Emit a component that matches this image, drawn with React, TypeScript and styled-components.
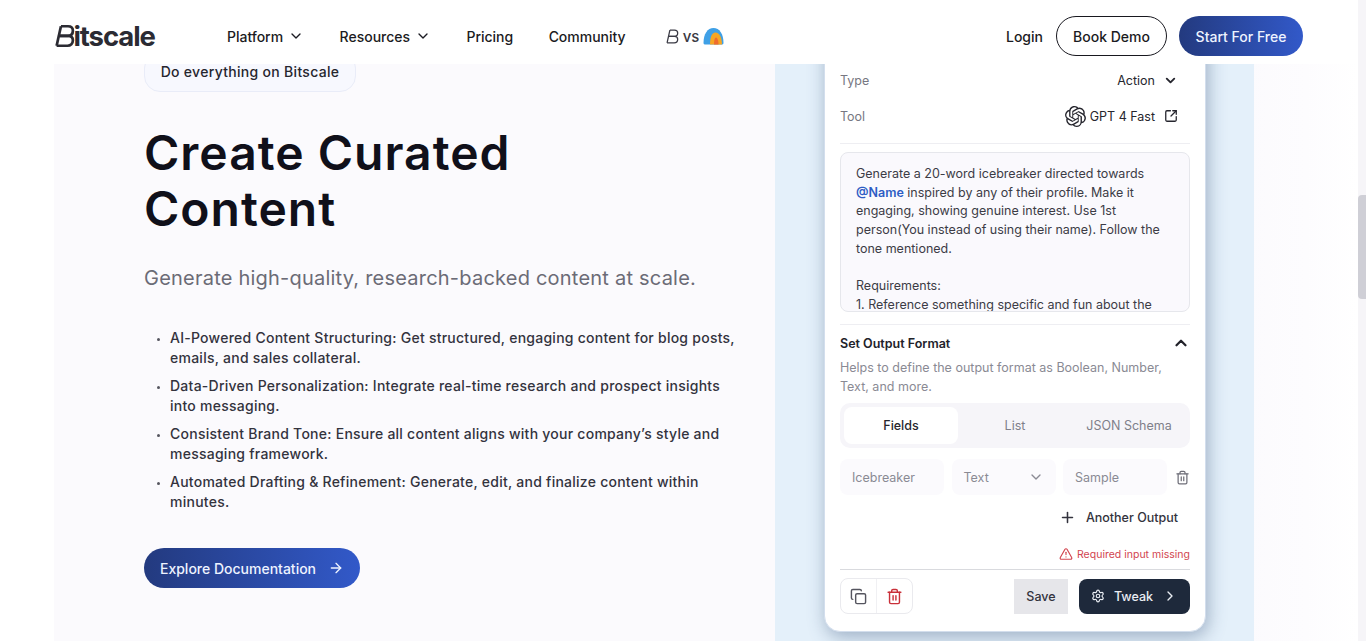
import { FC } from 'react'
import styled, { createGlobalStyle } from 'styled-components'
import {
  ArrowRight,
  ChevronDown,
  ChevronRight,
  ChevronUp,
  Copy,
  Plus,
  Settings,
  SquareArrowOutUpRight,
  Trash2,
  TriangleAlert,
} from 'lucide-react'
import { SiOpenai } from 'react-icons/si'

const GlobalStyle = createGlobalStyle`
  html, body {
    margin: 0;
    padding: 0;
    height: 641px;
    overflow: hidden;
    background: #fff;
    font-family: Inter, 'Liberation Sans', sans-serif;
    color: #18181f;
  }
  * { box-sizing: border-box; }
`

const Page = styled.div`
  display: flex;
  width: 1366px;
  height: 641px;
  overflow: hidden;
`

const Main = styled.div`
  flex: 1;
  display: flex;
  flex-direction: column;
  min-width: 0;
`

const ScrollTrack = styled.div`
  width: 8px;
  background: #f6f5f8;
  padding-top: 195px;
`

const ScrollThumb = styled.div`
  height: 104px;
  background: #cfcfd6;
  border-radius: 4px 0 0 4px;
`

const Header = styled.header`
  height: 64px;
  flex: none;
  background: #fff;
  display: flex;
  align-items: center;
  padding: 8px 55px 0;
  position: relative;
  z-index: 2;
`

const Logo = styled.div`
  display: flex;
  align-items: center;
  width: 172px;
  color: #2b2b33;
`

const LogoText = styled.span`
  font-family: Inter, sans-serif;
  font-size: 27.5px;
  font-weight: 700;
  letter-spacing: -1.1px;
  margin-left: -1px;
`

const Nav = styled.nav`
  display: flex;
  align-items: center;
  gap: 35.5px;
  flex: 1;
`

const NavItem = styled.a`
  display: flex;
  align-items: center;
  gap: 5px;
  font-size: 14px;
  font-weight: 450;
  letter-spacing: -0.02px;
  color: #1b1b22;
`

const VsItem = styled(NavItem)`
  gap: 4px;
  margin-left: 5px;
  font-size: 15px;
  color: #3a3a44;
`

const HeaderActions = styled.div`
  display: flex;
  align-items: center;
`

const Login = styled.a`
  font-size: 14px;
  font-weight: 450;
  color: #1b1b22;
  margin-right: 13px;
`

const OutlineButton = styled.a`
  width: 111px;
  height: 40px;
  border: 1px solid #18181f;
  border-radius: 20px;
  display: flex;
  align-items: center;
  justify-content: center;
  font-size: 14px;
  font-weight: 450;
  margin-right: 12px;
  color: #1b1b22;
`

const GradientButton = styled.a<{ $width: number }>`
  width: ${(p) => p.$width}px;
  height: 40px;
  border-radius: 20px;
  background: linear-gradient(90deg, #233a7f 0%, #3259c9 100%);
  color: #eef3ff;
  display: flex;
  align-items: center;
  justify-content: center;
  gap: 12px;
  font-size: 14px;
  font-weight: 500;
`

const Section = styled.section`
  flex: 1;
  min-height: 0;
  display: flex;
  overflow: hidden;
  margin-left: 54px;
  background: linear-gradient(90deg, #fbfafd 0%, #fbfafd 90%, #fdfcfe 96%, #ffffff 100%);
`

const Copyside = styled.div`
  width: 721px;
  flex: none;
  padding-left: 90px;
`

const Pill = styled.div`
  width: 212px;
  height: 40px;
  margin-top: -12px;
  padding-bottom: 2px;
  border: 1px solid #e9ecf8;
  border-radius: 16px;
  background: #f7f8fe;
  display: flex;
  align-items: center;
  justify-content: center;
  font-size: 14px;
  font-weight: 500;
  letter-spacing: 0.3px;
  color: #26262e;
`

const Title = styled.h1`
  margin: 33px 0 0;
  font-family: Inter, sans-serif;
  font-size: 48px;
  line-height: 56px;
  font-weight: 600;
  letter-spacing: 1px;
  color: #10101a;
  max-width: 420px;
`

const Subtitle = styled.p`
  margin: 27px 0 0;
  font-size: 20px;
  line-height: 28px;
  letter-spacing: 0.22px;
  color: #6b6b76;
`

const Bullets = styled.ul`
  margin: 36px 0 0;
  padding: 0 0 0 26px;
  width: 597px;
  display: flex;
  flex-direction: column;
  gap: 8px;
`

const Bullet = styled.li`
  font-size: 14px;
  line-height: 20px;
  font-weight: 450;
  letter-spacing: 0.25px;
  color: #33333d;
  &::marker {
    font-size: 9px;
    color: #55555f;
  }
`

const ExploreWrap = styled.div`
  margin-top: 36px;
`

const Demo = styled.div`
  width: 479px;
  flex: none;
  background: #e4f0fa;
  padding: 0 48px 0 49px;
`

const Card = styled.div`
  width: 382px;
  height: 600px;
  margin-top: -32px;
  padding: 29px 15px 0;
  background: #fff;
  border: 1px solid #d3deed;
  border-radius: 16px;
  box-shadow: 2px 5px 18px rgba(60, 85, 125, 0.42);
  font-size: 12.5px;
`

const PropRow = styled.div`
  height: 36px;
  display: flex;
  align-items: center;
  justify-content: space-between;
  color: #777782;
`

const PropValue = styled.div`
  display: flex;
  align-items: center;
  gap: 8px;
  color: #26262e;
  padding-right: 12px;
`

const ToolValue = styled(PropValue)`
  gap: 4px;
`

const ToolLabel = styled.span`
  margin-right: 5px;
`

const Rule = styled.div<{ $strong?: boolean; $top?: number }>`
  height: 1px;
  margin-top: ${(p) => p.$top ?? 0}px;
  background: ${(p) => (p.$strong ? '#d9dade' : '#eeeef2')};
`

const PromptBox = styled.div`
  height: 160px;
  margin-top: 8px;
  margin-bottom: 12px;
  padding: 12px 15px 0;
  border: 1px solid #e6e7ec;
  border-radius: 8px;
  background: #faf9fd;
  overflow: hidden;
  line-height: 18.7px;
  color: #3c3c46;
`

const Mention = styled.span`
  color: #2d5cc4;
  font-weight: 600;
`

const Blank = styled.div`
  height: 18.7px;
`

const FormatHead = styled.div`
  height: 30px;
  margin-top: 3px;
  display: flex;
  align-items: center;
  justify-content: space-between;
  font-weight: 600;
  font-size: 12.5px;
  color: #22222a;
`

const Helper = styled.p`
  margin: 0;
  font-size: 12.5px;
  line-height: 19px;
  color: #8a8a94;
`

const Tabs = styled.div`
  margin-top: 7px;
  height: 45px;
  padding: 4px;
  background: #f6f5f9;
  border-radius: 10px;
  display: grid;
  grid-template-columns: repeat(3, 1fr);
`

const Tab = styled.div<{ $active?: boolean }>`
  display: flex;
  align-items: center;
  justify-content: center;
  border-radius: 8px;
  background: ${(p) => (p.$active ? '#fff' : 'transparent')};
  color: ${(p) => (p.$active ? '#26262e' : '#7f7f8a')};
  font-weight: ${(p) => (p.$active ? 500 : 400)};
`

const FieldRow = styled.div`
  margin-top: 11px;
  display: flex;
  align-items: center;
  gap: 7.5px;
  color: #8a8a94;
`

const Field = styled.div<{ $width: number }>`
  width: ${(p) => p.$width}px;
  height: 36px;
  flex: none;
  padding: 0 12px;
  border-radius: 8px;
  background: #fbfafd;
  display: flex;
  align-items: center;
  justify-content: space-between;
`

const BinButton = styled.div`
  display: flex;
  color: #6f6f79;
`

const AddOutput = styled.div`
  height: 44px;
  display: flex;
  align-items: center;
  justify-content: flex-end;
  gap: 10px;
  padding-right: 12px;
  color: #33333d;
  font-weight: 500;
`

const Warning = styled.div`
  margin-top: 6px;
  height: 18px;
  display: flex;
  align-items: center;
  justify-content: flex-end;
  gap: 4px;
  font-size: 10.5px;
  color: #d2454f;
`

const Actions = styled.div`
  display: flex;
  align-items: center;
  justify-content: space-between;
  padding-top: 8px;
`

const IconGroup = styled.div`
  display: flex;
  width: 73px;
  height: 36px;
  border: 1px solid #eaeaee;
  border-radius: 8px;
`

const IconCell = styled.div<{ $danger?: boolean }>`
  flex: 1;
  display: flex;
  align-items: center;
  justify-content: center;
  color: ${(p) => (p.$danger ? '#c9303a' : '#55555f')};
  & + & {
    border-left: 1px solid #f0f0f3;
  }
`

const ActionButtons = styled.div`
  display: flex;
  align-items: center;
  gap: 11px;
`

const SaveButton = styled.div`
  width: 54px;
  height: 35px;
  background: #e6e6ea;
  display: flex;
  align-items: center;
  justify-content: center;
  font-weight: 500;
  color: #33333d;
`

const TweakButton = styled.div`
  width: 111px;
  height: 35px;
  border-radius: 8px;
  background: #1e293b;
  color: #e9edf3;
  display: flex;
  align-items: center;
  justify-content: center;
  gap: 9px;
  font-weight: 500;
`

const BMark: FC<{ size: number; stroke: number }> = ({ size, stroke }) => (
  <svg width={size * 0.75} height={size} viewBox="0 0 18 24" fill="none" stroke="currentColor" strokeWidth={stroke}>
    <path d="M5.500 3h6.500c3 0 4.500 1.600 4.500 4.200 0 2.800-1.800 4.600-4.600 4.600H4" />
    <path d="M4 11.800h8c3 0 4.500 1.600 4.500 4.200 0 3-2 5-5 5H1.500" />
    <path d="M5.500 3 1.500 21" />
  </svg>
)

const Dome: FC = () => (
  <svg width="21" height="18" viewBox="0 0 21 18">
    <path d="M0.500 16C0.500 7 4.500 1 10.500 1s10 6 10 15c0 1-1 1.500-2 1.500H2.500C1.500 17.500 0.500 17 0.500 16Z" fill="#3fa0e6" />
    <path d="M7 17.500C7 11 8.500 5.500 12.500 5.500s6.500 5.500 6.500 12Z" fill="#f6a623" />
    <path d="M11 17.500c0-4 .7-7 2-7s2.500 3 2.500 7Z" fill="#ef6c2e" />
  </svg>
)

const bullets = [
  'AI-Powered Content Structuring: Get structured, engaging content for blog posts, emails, and sales collateral.',
  'Data-Driven Personalization: Integrate real-time research and prospect insights into messaging.',
  'Consistent Brand Tone: Ensure all content aligns with your company’s style and messaging framework.',
  'Automated Drafting & Refinement: Generate, edit, and finalize content within minutes.',
]

const App: FC = () => {
  return (
    <Page>
      <GlobalStyle />
      <Main>
        <Header>
          <Logo>
            <BMark size={26} stroke={2.5} />
            <LogoText>itscale</LogoText>
          </Logo>
          <Nav>
            <NavItem>
              Platform <ChevronDown size={16} />
            </NavItem>
            <NavItem>
              Resources <ChevronDown size={16} />
            </NavItem>
            <NavItem>Pricing</NavItem>
            <NavItem>Community</NavItem>
            <VsItem>
              <BMark size={17} stroke={1.8} /> vs <Dome />
            </VsItem>
          </Nav>
          <HeaderActions>
            <Login>Login</Login>
            <OutlineButton>Book Demo</OutlineButton>
            <GradientButton $width={124}>Start For Free</GradientButton>
          </HeaderActions>
        </Header>
        <Section>
          <Copyside>
            <Pill>Do everything on Bitscale</Pill>
            <Title>Create Curated Content</Title>
            <Subtitle>Generate high-quality, research-backed content at scale.</Subtitle>
            <Bullets>
              {bullets.map((text) => (
                <Bullet key={text}>{text}</Bullet>
              ))}
            </Bullets>
            <ExploreWrap>
              <GradientButton $width={216}>
                Explore Documentation <ArrowRight size={16} />
              </GradientButton>
            </ExploreWrap>
          </Copyside>
          <Demo>
            <Card>
              <PropRow>
                Type
                <PropValue>
                  Action <ChevronDown size={15} strokeWidth={3} />
                </PropValue>
              </PropRow>
              <PropRow>
                Tool
                <ToolValue>
                  <SiOpenai size={21} />
                  <ToolLabel>GPT 4 Fast</ToolLabel>
                  <SquareArrowOutUpRight size={14} strokeWidth={2.2} />
                </ToolValue>
              </PropRow>
              <Rule $top={9} />
              <PromptBox>
                Generate a 20-word icebreaker directed towards <Mention>@Name</Mention> inspired by any of their
                profile. Make it engaging, showing genuine interest. Use 1st person(You instead of using their name).
                Follow the tone mentioned.
                <Blank />
                Requirements:
                <br />
                1. Reference something specific and fun about the
              </PromptBox>
              <Rule />
              <FormatHead>
                Set Output Format <ChevronUp size={18} strokeWidth={3} />
              </FormatHead>
              <Helper>Helps to define the output format as Boolean, Number, Text, and more.</Helper>
              <Tabs>
                <Tab $active>Fields</Tab>
                <Tab>List</Tab>
                <Tab>JSON Schema</Tab>
              </Tabs>
              <FieldRow>
                <Field $width={104}>Icebreaker</Field>
                <Field $width={104}>
                  Text <ChevronDown size={16} />
                </Field>
                <Field $width={104}>Sample</Field>
                <BinButton>
                  <Trash2 size={15} />
                </BinButton>
              </FieldRow>
              <AddOutput>
                <Plus size={17} strokeWidth={2.2} />
                Another Output
              </AddOutput>
              <Warning>
                <TriangleAlert size={14} />
                Required input missing
              </Warning>
              <Rule $strong $top={6} />
              <Actions>
                <IconGroup>
                  <IconCell>
                    <Copy size={17} />
                  </IconCell>
                  <IconCell $danger>
                    <Trash2 size={17} />
                  </IconCell>
                </IconGroup>
                <ActionButtons>
                  <SaveButton>Save</SaveButton>
                  <TweakButton>
                    <Settings size={14} />
                    Tweak
                    <ChevronRight size={16} />
                  </TweakButton>
                </ActionButtons>
              </Actions>
            </Card>
          </Demo>
        </Section>
      </Main>
      <ScrollTrack>
        <ScrollThumb />
      </ScrollTrack>
    </Page>
  )
}

export default App
